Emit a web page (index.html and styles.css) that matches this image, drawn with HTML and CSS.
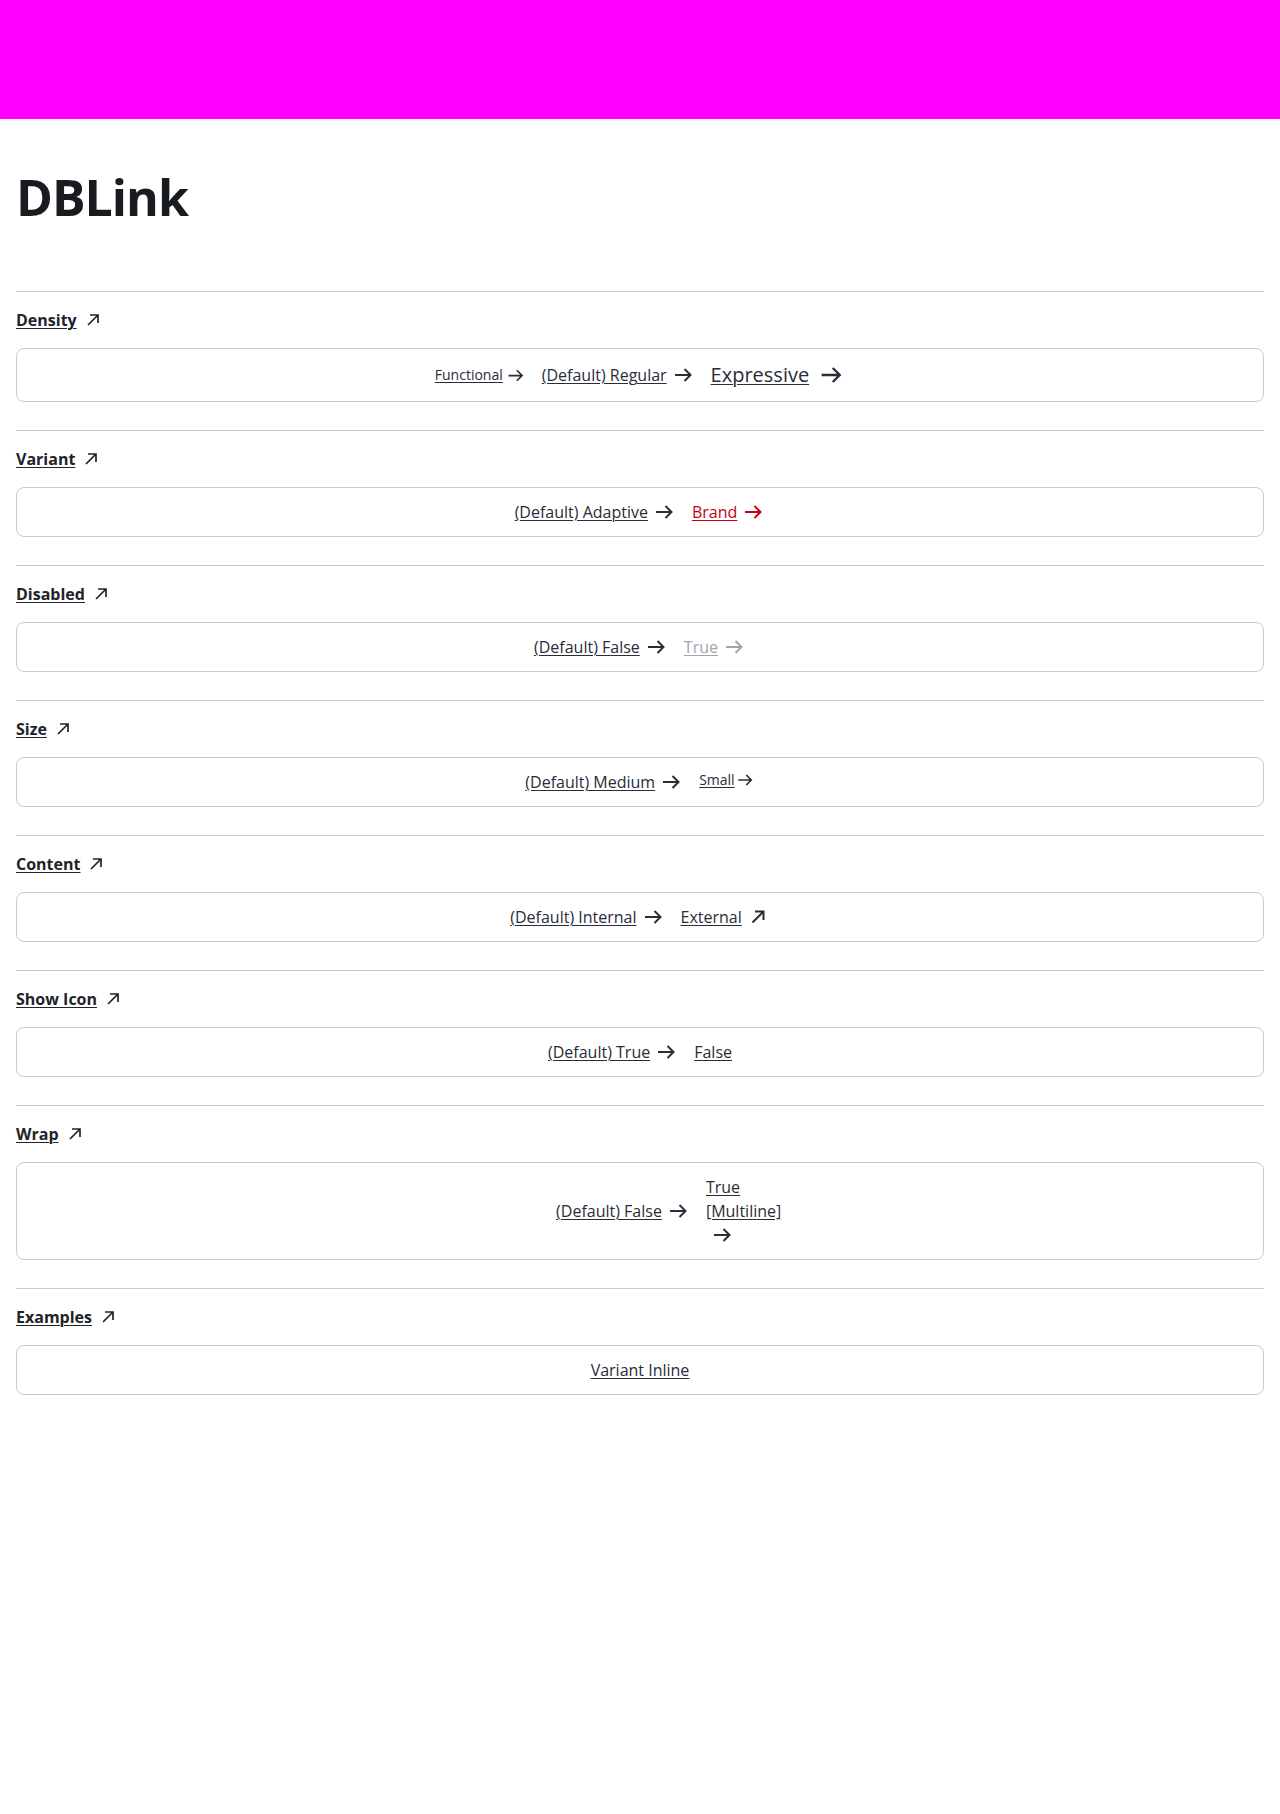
FILE: index.html
```html
<!DOCTYPE html>
<html lang="en">
<head>
<meta charset="utf-8">
<title>DBLink</title>
<link rel="stylesheet" href="styles.css">
</head>
<body>
<header class="topbar"></header>
<main class="page">
  <h1 class="title">DBLink</h1>

  <section class="section">
    <a class="heading" href="#"><span class="txt">Density</span><svg class="ext" viewBox="0 0 16 16"><path d="M3 13L13 3M5 3h8v8"/></svg></a>
    <div class="box">
      <a class="link fs-14" href="#"><span class="txt">Functional</span><svg class="ico" viewBox="0 0 24 24"><path d="M4 12h15M13.5 6l6 6-6 6"/></svg></a>
      <a class="link" href="#"><span class="txt">(Default) Regular</span><svg class="ico" viewBox="0 0 24 24"><path d="M4 12h15M13.5 6l6 6-6 6"/></svg></a>
      <a class="link fs-20" href="#"><span class="txt">Expressive</span><svg class="ico" viewBox="0 0 24 24"><path d="M4 12h15M13.5 6l6 6-6 6"/></svg></a>
    </div>
  </section>

  <section class="section">
    <a class="heading" href="#"><span class="txt">Variant</span><svg class="ext" viewBox="0 0 16 16"><path d="M3 13L13 3M5 3h8v8"/></svg></a>
    <div class="box">
      <a class="link" href="#"><span class="txt">(Default) Adaptive</span><svg class="ico" viewBox="0 0 24 24"><path d="M4 12h15M13.5 6l6 6-6 6"/></svg></a>
      <a class="link brand" href="#"><span class="txt">Brand</span><svg class="ico" viewBox="0 0 24 24"><path d="M4 12h15M13.5 6l6 6-6 6"/></svg></a>
    </div>
  </section>

  <section class="section">
    <a class="heading" href="#"><span class="txt">Disabled</span><svg class="ext" viewBox="0 0 16 16"><path d="M3 13L13 3M5 3h8v8"/></svg></a>
    <div class="box">
      <a class="link" href="#"><span class="txt">(Default) False</span><svg class="ico" viewBox="0 0 24 24"><path d="M4 12h15M13.5 6l6 6-6 6"/></svg></a>
      <a class="link disabled" aria-disabled="true"><span class="txt">True</span><svg class="ico" viewBox="0 0 24 24"><path d="M4 12h15M13.5 6l6 6-6 6"/></svg></a>
    </div>
  </section>

  <section class="section">
    <a class="heading" href="#"><span class="txt">Size</span><svg class="ext" viewBox="0 0 16 16"><path d="M3 13L13 3M5 3h8v8"/></svg></a>
    <div class="box">
      <a class="link" href="#"><span class="txt">(Default) Medium</span><svg class="ico" viewBox="0 0 24 24"><path d="M4 12h15M13.5 6l6 6-6 6"/></svg></a>
      <a class="link small" href="#"><span class="txt">Small</span><svg class="ico" viewBox="0 0 24 24"><path d="M4 12h15M13.5 6l6 6-6 6"/></svg></a>
    </div>
  </section>

  <section class="section">
    <a class="heading" href="#"><span class="txt">Content</span><svg class="ext" viewBox="0 0 16 16"><path d="M3 13L13 3M5 3h8v8"/></svg></a>
    <div class="box">
      <a class="link" href="#"><span class="txt">(Default) Internal</span><svg class="ico" viewBox="0 0 24 24"><path d="M4 12h15M13.5 6l6 6-6 6"/></svg></a>
      <a class="link" href="#"><span class="txt">External</span><svg class="ico" viewBox="0 0 24 24"><path d="M6.5 17.5L17.5 6.5M9 6.5h8.5V15"/></svg></a>
    </div>
  </section>

  <section class="section">
    <a class="heading" href="#"><span class="txt">Show Icon</span><svg class="ext" viewBox="0 0 16 16"><path d="M3 13L13 3M5 3h8v8"/></svg></a>
    <div class="box">
      <a class="link" href="#"><span class="txt">(Default) True</span><svg class="ico" viewBox="0 0 24 24"><path d="M4 12h15M13.5 6l6 6-6 6"/></svg></a>
      <a class="link" href="#"><span class="txt">False</span></a>
    </div>
  </section>

  <section class="section">
    <a class="heading" href="#"><span class="txt">Wrap</span><svg class="ext" viewBox="0 0 16 16"><path d="M3 13L13 3M5 3h8v8"/></svg></a>
    <div class="box">
      <a class="link" href="#"><span class="txt">(Default) False</span><svg class="ico" viewBox="0 0 24 24"><path d="M4 12h15M13.5 6l6 6-6 6"/></svg></a>
      <a class="link-wrap" href="#"><span class="txt">True [Multiline]</span><svg class="ico" viewBox="0 0 24 24"><path d="M4 12h15M13.5 6l6 6-6 6"/></svg></a>
    </div>
  </section>

  <section class="section">
    <a class="heading" href="#"><span class="txt">Examples</span><svg class="ext" viewBox="0 0 16 16"><path d="M3 13L13 3M5 3h8v8"/></svg></a>
    <div class="box">
      <a class="link" href="#"><span class="txt">Variant Inline</span></a>
    </div>
  </section>
</main>
</body>
</html>
```

FILE: styles.css
```css
* { box-sizing: border-box; }

body {
  margin: 0;
  background: #ffffff;
  color: #282d37;
  font-family: "Open Sans", "Noto Sans", sans-serif;
  font-size: 16px;
  line-height: 24px;
}

.topbar {
  height: 119px;
  background: #ff00ff;
}

.page {
  padding: 48px 16px 0;
}

.title {
  margin: 0 0 64px;
  font-size: 50px;
  line-height: 60px;
  font-weight: 700;
  letter-spacing: -1px;
  color: #181b20;
}

.section {
  border-top: 1px solid #c8cacf;
  padding: 16px 0 28px;
  display: flex;
  flex-direction: column;
  align-items: flex-start;
  gap: 16px;
}

.heading {
  display: inline-flex;
  align-items: center;
  color: #1f232a;
  font-weight: 700;
  font-size: 16px;
  line-height: 24px;
  text-decoration: none;
}

.heading .txt {
  text-decoration: underline;
  text-decoration-thickness: 1px;
  text-underline-offset: 2px;
}

.ext {
  width: 16px;
  height: 16px;
  margin-left: 8px;
  fill: none;
  stroke: #1f232a;
  stroke-width: 1.7;
}

.box {
  align-self: stretch;
  border: 1px solid #c8cacf;
  border-radius: 8px;
  padding: 12px 16px;
  display: flex;
  justify-content: center;
  align-items: center;
  gap: 16px;
}

.link {
  display: inline-flex;
  align-items: center;
  gap: 4px;
  color: #282d37;
  text-decoration: none;
  font-size: 16px;
  line-height: 24px;
}

.txt {
  text-decoration: underline;
  text-decoration-thickness: 1px;
  text-underline-offset: 2px;
}

.ico {
  width: 24px;
  height: 24px;
  flex: none;
  fill: none;
  stroke: currentColor;
  stroke-width: 2;
}

.fs-14 {
  font-size: 14px;
  line-height: 20px;
  gap: 2px;
}

.fs-14 .ico {
  width: 21px;
  height: 21px;
}

.fs-20 {
  font-size: 20px;
  line-height: 28px;
  gap: 8px;
}

.fs-20 .ico {
  width: 28px;
  height: 28px;
}

.small {
  align-self: flex-start;
  font-size: 14px;
  line-height: 20px;
  gap: 0;
}

.small .ico {
  width: 20px;
  height: 20px;
}

.brand {
  color: #c50014;
}

.disabled {
  color: #a2a5aa;
}

.link-wrap {
  display: inline-block;
  width: 18px;
  color: #282d37;
  text-decoration: none;
  font-size: 16px;
  line-height: 24px;
  text-align: left;
  white-space: normal;
}

.link-wrap .ico {
  vertical-align: top;
  margin-left: 4px;
}
```
